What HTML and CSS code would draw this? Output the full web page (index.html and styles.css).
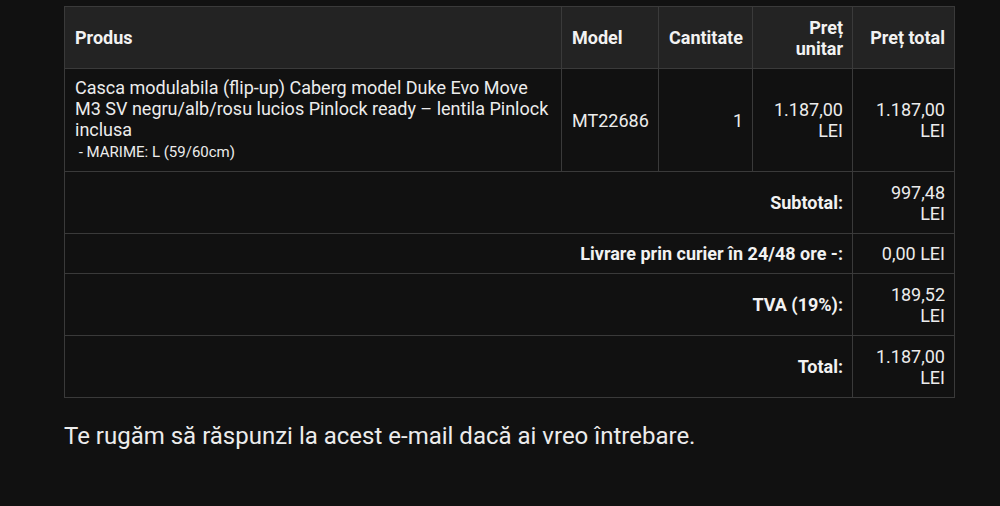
FILE: index.html
```html
<!DOCTYPE html>
<html lang="ro">
  <head>
    <meta charset="UTF-8" />
    <meta name="viewport" content="width=device-width, initial-scale=1.0" />
    <title>Comanda</title>
    <link rel="stylesheet" href="styles.css">
  </head>
  <body>
    <div class="wrapper">
      <table class="order">
        <colgroup>
          <col class="col-product" />
          <col class="col-model" />
          <col class="col-qty" />
          <col class="col-unit" />
          <col class="col-total" />
        </colgroup>
        <thead>
          <tr>
            <th>Produs</th>
            <th>Model</th>
            <th class="nowrap">Cantitate</th>
            <th class="right">Preț unitar</th>
            <th class="right">Preț total</th>
          </tr>
        </thead>
        <tbody>
          <tr class="product">
            <td>
              Casca modulabila (flip-up) Caberg model Duke Evo Move M3 SV negru/alb/rosu lucios Pinlock ready – lentila Pinlock inclusa
              <br />
              <small>&nbsp;- MARIME: L (59/60cm)</small>
            </td>
            <td>MT22686</td>
            <td class="right">1</td>
            <td class="right">1.187,00 LEI</td>
            <td class="right">1.187,00 LEI</td>
          </tr>
        </tbody>
        <tfoot>
          <tr class="tall">
            <th colspan="4" class="right">Subtotal:</th>
            <td class="right">997,48 LEI</td>
          </tr>
          <tr>
            <th colspan="4" class="right">Livrare prin curier în 24/48 ore -:</th>
            <td class="right">0,00 LEI</td>
          </tr>
          <tr class="tall">
            <th colspan="4" class="right">TVA (19%):</th>
            <td class="right">189,52 LEI</td>
          </tr>
          <tr class="tall">
            <th colspan="4" class="right">Total:</th>
            <td class="right">1.187,00 LEI</td>
          </tr>
        </tfoot>
      </table>

      <p class="note">Te rugăm să răspunzi la acest e-mail dacă ai vreo întrebare.</p>
    </div>
  </body>
</html>
```

FILE: styles.css
```css
* {
  margin: 0;
  padding: 0;
  box-sizing: border-box;
  font-family: Roboto, "Noto Sans", sans-serif;
}

body {
  background: #111111;
  color: #ececec;
}

.wrapper {
  padding: 6px 0 0 64px;
}

.order {
  width: 890px;
  border-collapse: collapse;
  border: 1px solid #3a3a3a;
  table-layout: fixed;
  font-size: 18px;
  line-height: 21px;
}

.col-product { width: 497px; }
.col-model { width: 97px; }
.col-qty { width: 94px; }
.col-unit { width: 100px; }
.col-total { width: 102px; }

th,
td {
  border: 1px solid #3a3a3a;
  padding: 9px 9px 9px 10px;
  text-align: left;
  vertical-align: middle;
}

th {
  font-weight: bold;
  color: #f2f2f2;
}

.nowrap {
  white-space: nowrap;
}

thead tr {
  background: #232323;
  height: 62px;
}

.right {
  text-align: right;
}

.product td {
  padding-top: 8px;
  padding-bottom: 8px;
}

.product small {
  font-size: 15px;
}

tfoot tr {
  height: 39px;
}

tfoot tr.tall {
  height: 62px;
}

.note {
  margin-top: 24px;
  font-size: 24px;
  line-height: 28px;
}
```
